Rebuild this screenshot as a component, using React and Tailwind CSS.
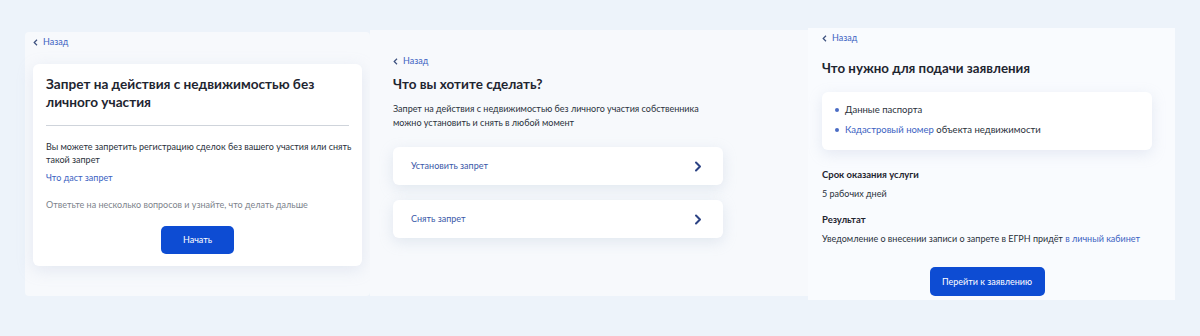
import React from "react";

const font = { fontFamily: "Lato, 'Noto Sans', sans-serif" };

const Back = ({ className = "" }) => (
	<div className={`flex items-center gap-[5px] text-[9px] text-[#3b62c2] ${className}`}>
		<svg width="5" height="7" viewBox="0 0 5 7" fill="none">
			<polyline points="4,0.8 1.2,3.5 4,6.2" stroke="#3b4f7e" strokeWidth="1.2" />
		</svg>
		<span>Назад</span>
	</div>
);

const Chevron = () => (
	<svg width="8" height="11" viewBox="0 0 8 11" fill="none">
		<polyline points="2,1.5 6,5.5 2,9.5" stroke="#2c4384" strokeWidth="2" strokeLinecap="round" strokeLinejoin="round" />
	</svg>
);

const Option = ({ label }) => (
	<div className="flex items-center justify-between h-[38px] w-[330px] pl-[18px] pr-[21px] bg-white rounded-md shadow-[0_4px_14px_rgba(170,185,210,0.28)]">
		<span className="text-[9px] text-[#3a58a8]">{label}</span>
		<Chevron />
	</div>
);

const App = () => {
	return (
		<div style={font} className="w-[1200px] h-[336px] bg-[#edf3fa] flex text-[#1e2530] overflow-hidden">
			{/* left */}
			<div className="ml-[25px] mt-[32px] w-[345px] h-[264px] bg-[#f7f9fc] rounded-sm pl-[8px] pt-[3px]">
				<Back className="h-[14px]" />
				<div className="mt-[15px] w-[329px] h-[202px] bg-white rounded-md shadow-[0_4px_16px_rgba(170,185,210,0.25)] px-[13px] pt-[11px]">
					<h1 className="text-[13.6px] leading-[18px] font-bold">
						Запрет на действия с недвижимостью без личного участия
					</h1>
					<div className="mt-[14px] h-px bg-[#cfd4db]" />
					<p className="mt-[14px] -mr-[8px] text-[9px] leading-[13px] text-[#2a313b]">
						Вы можете запретить регистрацию сделок без вашего участия или снять такой запрет
					</p>
					<p className="mt-[5px] text-[9px] leading-[13px] text-[#3b62c2]">Что даст запрет</p>
					<p className="mt-[14px] text-[9px] leading-[13px] text-[#7d838c]">
						Ответьте на несколько вопросов и узнайте, что делать дальше
					</p>
					<div className="mt-[15px] flex justify-center">
						<button className="w-[73px] h-[28px] rounded-[5px] bg-[#0d4cd3] text-white text-[9px]">
							Начать
						</button>
					</div>
				</div>
			</div>

			{/* middle */}
			<div className="mt-[30px] w-[438px] h-[266px] bg-[#f7f9fc] pl-[23px] pt-[24px]">
				<Back className="h-[14px]" />
				<h2 className="mt-[6px] text-[13.5px] leading-[20px] font-bold">Что вы хотите сделать?</h2>
				<p className="mt-[8px] text-[9px] leading-[14px] text-[#2a313b] w-[320px]">
					Запрет на действия с недвижимостью без личного участия собственника можно установить и снять в любой момент
				</p>
				<div className="mt-[17px] flex flex-col gap-[15px]">
					<Option label="Установить запрет" />
					<Option label="Снять запрет" />
				</div>
			</div>

			{/* right */}
			<div className="mt-[28px] w-[367px] h-[272px] bg-[#f9fbfe] pl-[14px] pt-[3px]">
				<Back className="h-[14px]" />
				<h2 className="mt-[13px] text-[13.3px] leading-[20px] font-bold">Что нужно для подачи заявления</h2>
				<div className="mt-[14px] w-[330px] h-[58px] bg-white rounded-md shadow-[0_4px_14px_rgba(170,185,210,0.25)] pl-[13px] pt-[11px] flex flex-col gap-[7px]">
					<div className="flex items-center gap-[6px] text-[9.5px] leading-[13px] text-[#2a313b]">
						<span className="w-[4px] h-[4px] rounded-full bg-[#4a6cc4]" />
						Данные паспорта
					</div>
					<div className="flex items-center gap-[6px] text-[9.5px] leading-[13px] text-[#2a313b]">
						<span className="w-[4px] h-[4px] rounded-full bg-[#4a6cc4]" />
						<span>
							<span className="text-[#3b62c2]">Кадастровый номер</span> объекта недвижимости
						</span>
					</div>
				</div>
				<h3 className="mt-[18px] text-[9.5px] leading-[14px] font-bold">Срок оказания услуги</h3>
				<p className="mt-[5px] text-[9px] leading-[13px] text-[#2a313b]">5 рабочих дней</p>
				<h3 className="mt-[13px] text-[9.5px] leading-[14px] font-bold">Результат</h3>
				<p className="mt-[5px] text-[9px] leading-[13px] text-[#2a313b]">
					Уведомление о внесении записи о запрете в ЕГРН придёт{" "}
					<span className="text-[#3b62c2]">в личный кабинет</span>
				</p>
				<div className="mt-[22px] w-[330px] flex justify-center">
					<button className="w-[115px] h-[29px] rounded-[5px] bg-[#0d4cd3] text-white text-[9px]">
						Перейти к заявлению
					</button>
				</div>
			</div>
		</div>
	);
};

export default App;
